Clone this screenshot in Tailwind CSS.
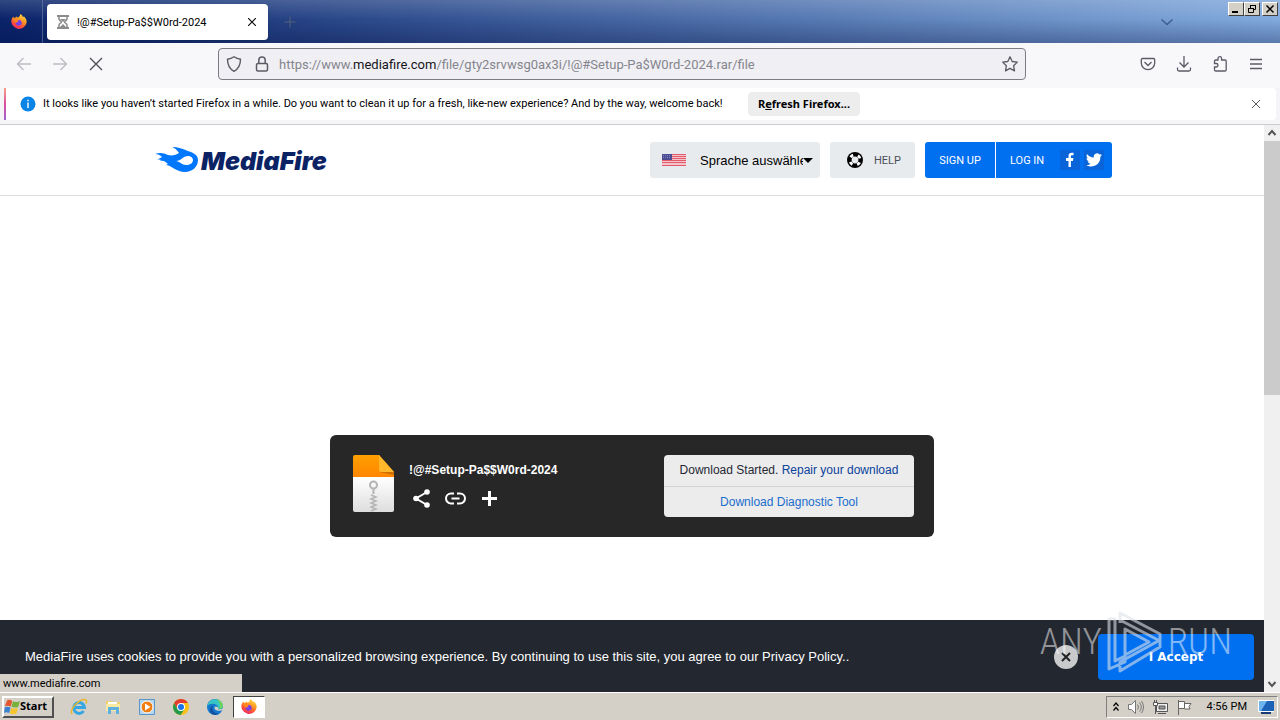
<!DOCTYPE html>
<html lang="en">
<head>
<meta charset="utf-8">
<meta name="viewport" content="width=device-width, initial-scale=1">
<title>!@#Setup-Pa$$W0rd-2024</title>
<script src="https://cdn.jsdelivr.net/npm/@tailwindcss/browser@4"></script>
</head>
<body class="flex h-screen flex-col overflow-hidden bg-white font-[Roboto,'Noto_Sans',sans-serif] text-[11px] text-black">

<!-- Shared symbols -->
<svg class="absolute size-0" aria-hidden="true">
  <defs>
    <linearGradient id="fxBody" x1="0.8" y1="0" x2="0.3" y2="1"><stop offset="0" stop-color="#ffe14a"/><stop offset=".4" stop-color="#ff9a22"/><stop offset=".75" stop-color="#ff4a3a"/><stop offset="1" stop-color="#e8286a"/></linearGradient>
    <symbol id="firefox" viewBox="0 0 16 16">
      <path fill="url(#fxBody)" d="M.7 5 2.200 2.400l.8 1.500 1.300-.2L6 2.200l.3 1.600C8 3.300 9 2.400 9.300.1c1.800 1 2.400 2.200 2.700 3.200.5-.1.7-.6.7-1 2 1.500 3 3.500 3 6A7.700 7.700 0 1 1 .7 5z"/>
      <path fill="#7542e5" d="M5 6.200c1.400-.7 3-.6 4.200.1 1.500.9 1.900 2.600 1.200 4-.8 1.400-2.600 1.800-4.100 1.100C5 10.700 4.300 9.300 4.500 8c.6.5 1.400.5 2 .1l1-.7c-.7-.8-1.600-1-2.500-1.200z"/>
      <path fill="#ff8a1e" d="M3.300 4.100c1.300-.7 2.800.2 3.300 1.200l1.600.3c0 .8-1.300 1-1.600 1.500-.3.6-.4 1.200-1.400 1.400C4 8.800 2.500 7 3.300 4.100z"/>
    </symbol>
  </defs>
</svg>

<!-- Tab strip -->
<header class="relative flex h-[43px] shrink-0 bg-[linear-gradient(180deg,rgba(255,255,255,.16),rgba(255,255,255,0)_45%,rgba(0,10,60,.3)),linear-gradient(90deg,#0a246a,#82aadd)]">
  <div class="flex w-[43px] items-center justify-center border-r border-[#6f80b0]/60 pr-1">
    <svg class="size-4" aria-label="Firefox"><use href="#firefox"/></svg>
  </div>
  <div class="ml-1 mt-1 flex h-9 w-[221px] items-center rounded bg-white pl-2 pr-2 shadow">
    <svg class="size-4 shrink-0" viewBox="0 0 16 16" fill="none" stroke="#8b8b8b"><path stroke-width="2" d="M2 2h12M2 14h12"/><path stroke-width="1.500" d="M4 3v2c0 1.500 2.500 2 2.500 3S4 9.500 4 11v2M12 3v2c0 1.500-2.500 2-2.500 3s2.500 1.500 2.500 3v2"/><path fill="#8b8b8b" stroke="none" d="M5 5h6L8 8zM5 13l3-3 3 3z"/></svg>
    <span class="ml-1.5 flex-1 whitespace-nowrap pt-0.5">!@#Setup-Pa$$W0rd-2024</span>
    <button aria-label="Close tab" class="flex size-4 items-center justify-center"><svg class="size-2" viewBox="0 0 8 8" stroke="#111" stroke-width="1.200"><path d="M0 0l8 8M8 0 0 8"/></svg></button>
  </div>
  <button aria-label="New tab" class="ml-4 flex w-3 items-center justify-center"><svg class="size-3" viewBox="0 0 12 12" stroke="#54617d"><path d="M6 .5v11M.5 6h11"/></svg></button>
  <div class="flex-1"></div>
  <button aria-label="List all tabs" class="mr-[107px] flex w-3 items-center justify-center"><svg class="h-2 w-3" viewBox="0 0 12 8" fill="none" stroke="#3f5e91" stroke-width="1.500"><path d="m.5 1.500 5.500 5 5.500-5"/></svg></button>
  <div class="absolute right-0.5 top-0.5 flex h-3.5">
    <button aria-label="Minimize" class="w-4 border border-b-[#404040] border-l-white border-r-[#404040] border-t-white bg-[#d4d0c8]"><svg class="h-3 w-3.5" viewBox="0 0 14 12"><path d="M3 8h6v2H3z"/></svg></button>
    <button aria-label="Restore" class="w-4 border border-b-[#404040] border-l-white border-r-[#404040] border-t-white bg-[#d4d0c8]"><svg class="h-3 w-3.5" viewBox="0 0 14 12" fill="none" stroke="#000"><path d="M5.500 5V2.500h5v4H9M5 2.500h6M3.500 5.500h5v4h-5zM3 5.500h6"/></svg></button>
    <button aria-label="Close" class="ml-0.5 w-4 border border-b-[#404040] border-l-white border-r-[#404040] border-t-white bg-[#d4d0c8]"><svg class="h-3 w-3.5" viewBox="0 0 14 12" stroke="#000" stroke-width="1.500"><path d="m3.500 2.500 7 7M10.500 2.500l-7 7"/></svg></button>
  </div>
</header>

<!-- Navigation toolbar -->
<nav class="flex h-[45px] shrink-0 items-center bg-[#f8f8fb] pb-1">
  <div class="flex w-[218px] items-center gap-5 pl-4">
    <button aria-label="Back" class="size-4"><svg viewBox="0 0 16 16" fill="none" stroke="#bcbcc2" stroke-width="1.300"><path d="M15 8H1.500M7.500 2l-6 6 6 6"/></svg></button>
    <button aria-label="Forward" class="size-4"><svg viewBox="0 0 16 16" fill="none" stroke="#bcbcc2" stroke-width="1.300"><path d="M1 8h13.500M8.500 2l6 6-6 6"/></svg></button>
    <button aria-label="Stop" class="size-4"><svg viewBox="0 0 16 16" stroke="#4f4f58" stroke-width="1.400"><path d="m2 2 12 12M14 2 2 14"/></svg></button>
  </div>
  <div class="flex h-8 flex-1 items-center rounded border border-[#7c7c84] bg-[#f0f0f4] px-[7px]">
    <svg class="size-4 shrink-0" viewBox="0 0 16 16" fill="none" stroke="#5b5b66" stroke-width="1.400"><path d="M8 .8c2 1.400 4 2.200 6.500 2.500 0 5.500-1.700 9.500-6.500 12C3.200 12.800 1.500 8.800 1.500 3.300 4 3 6 2.200 8 .8z"/></svg>
    <svg class="ml-3 size-4 shrink-0" viewBox="0 0 16 16" fill="none" stroke="#5b5b66" stroke-width="1.500"><rect x="2.500" y="7.500" width="11" height="7.500" rx="1.500"/><path d="M4.800 7.500V4.200a3.200 3.200 0 0 1 6.400 0v3.300"/></svg>
    <div role="textbox" aria-label="Address" class="ml-[9px] flex-1 whitespace-nowrap pt-0.5 text-[13px] text-[#85858d]">https://www.<span class="text-[#15141a]">mediafire.com</span>/file/gty2srvwsg0ax3i/!@#Setup-Pa$W0rd-2024.rar/file</div>
    <button aria-label="Bookmark this page" class="size-4"><svg viewBox="0 0 16 16" fill="none" stroke="#5b5b66" stroke-width="1.300" stroke-linejoin="round"><path d="m8 .8 2.200 4.700 5.100.6-3.700 3.600.9 5.200L8 12.400l-4.500 2.500.9-5.200L.7 6.100l5.100-.6z"/></svg></button>
  </div>
  <div class="flex w-[254px] items-center justify-end gap-5 pr-4">
    <button aria-label="Pocket" class="size-4"><svg viewBox="0 0 16 16" fill="none" stroke="#5b5b66" stroke-width="1.300"><path d="M2.500 2.500h11c.7 0 1.200.5 1.200 1.200V7a6.700 6.700 0 0 1-13.400 0V3.700c0-.7.5-1.200 1.200-1.200z"/><path d="m4.500 6 3.500 3.500L11.500 6"/></svg></button>
    <button aria-label="Downloads" class="size-4"><svg viewBox="0 0 16 16" fill="none" stroke="#5b5b66" stroke-width="1.300"><path d="M8 0v10.500M3.500 6.500 8 11l4.500-4.500M1.500 11.500v2c0 1 .5 1.500 1.500 1.500h10c1 0 1.500-.5 1.500-1.500v-2"/></svg></button>
    <button aria-label="Extensions" class="size-4"><svg viewBox="0 0 16 16" fill="none" stroke="#5b5b66" stroke-width="1.300"><path d="M6 4V2.500a1.800 1.800 0 0 1 3.600 0V4H13c.7 0 1.200.5 1.200 1.200v8.600c0 .7-.5 1.200-1.200 1.200H3.700c-.7 0-1.200-.5-1.200-1.200V11h1.700a1.700 1.700 0 0 0 0-3.500H2.500V5.200C2.500 4.500 3 4 3.700 4z"/></svg></button>
    <button aria-label="Menu" class="size-4"><svg viewBox="0 0 16 16" stroke="#5b5b66" stroke-width="1.300"><path d="M2 3.500h12M2 8h12M2 12.500h12"/></svg></button>
  </div>
</nav>

<!-- Notification bar -->
<section class="shrink-0 border-b border-[#cccccf] bg-[#f5f5f7] pb-1">
  <div class="mx-1 flex h-8 items-center rounded bg-white">
    <div class="h-8 w-0.5 bg-linear-to-b from-[#f5a08a] via-[#d84d9c] to-[#9d63d3]"></div>
    <svg class="ml-3.5 size-4 shrink-0" viewBox="0 0 16 16"><circle cx="8" cy="8" r="7.500" fill="#0a84e5"/><path fill="#fff" d="M7.300 6.500h1.400V12H7.300zM7.300 3.800h1.400v1.500H7.300z"/></svg>
    <p class="ml-[7px] min-w-[685px] whitespace-nowrap">It looks like you haven’t started Firefox in a while. Do you want to clean it up for a fresh, like-new experience? And by the way, welcome back!</p>
    <button class="ml-5 h-6 w-28 whitespace-nowrap rounded bg-[#ededee] font-['Noto_Sans'] text-[11px] font-bold">R<u>e</u>fresh Firefox...</button>
    <div class="flex-1"></div>
    <button aria-label="Dismiss" class="mr-4 size-2"><svg viewBox="0 0 8 8" stroke="#5b5b66"><path d="m0 0 8 8M8 0 0 8"/></svg></button>
  </div>
</section>

<div class="relative flex min-h-0 flex-1">
  <!-- MediaFire page -->
  <div class="flex min-w-0 flex-1 flex-col font-['Liberation_Sans',Arial,sans-serif]">
    <header class="shrink-0 border-b border-[#dcdde0]">
      <div class="mx-auto flex h-[70px] max-w-[960px] items-center">
        <a href="#" class="flex items-center" aria-label="MediaFire home">
          <svg class="h-[26px] w-[46px]" viewBox="0 0 46 26"><path fill="#0077ff" fill-rule="evenodd" d="M0 14C4 13 7 12 10 10 8 8 6 7 3 7c5-2 9-1 13 1 4 1 8 0 11-2-2-3-4-5-7-6 6 0 11 2 16 4 6 2 10 4 10 9 0 7-6 12-13 12-9 0-12-6-19-7l2-1c-3-3-5-4-8-3l1-1c-3-1-5 0-9 1zM24 14c3 0 6 4 10 4 4 0 7-2 7-5 0-2-2-4-5-4-5 0-7 5-12 5z"/></svg>
          <span class="ml-[3px] pt-0.5 font-[Inter] text-[25px] font-black italic leading-7 text-[#0b2265]">MediaFire</span>
        </a>
        <div class="flex-1"></div>
        <div class="flex h-9 gap-2.5 font-[Roboto] text-[11px]">
          <div class="relative flex w-[170px] items-center rounded-[3px] bg-[#e8ebee] pl-3">
            <svg class="h-3 w-6 shrink-0" viewBox="0 0 24 12"><path fill="#f6c3c8" d="M0 0h24v12H0z"/><path stroke="#de5c6b" stroke-width="1" d="M0 .5h24M0 2.500h24M0 4.500h24M0 6.500h24M0 8.500h24M0 11.500h24"/><path fill="#4b4c91" d="M0 0h10v6H0z"/><path stroke="#8586bd" stroke-dasharray="1 1" d="M1 1.500h8M1 3.500h8"/></svg>
            <select aria-label="Sprache" class="ml-3.5 w-[103px] appearance-none overflow-hidden whitespace-nowrap bg-transparent pt-0.5 font-['Liberation_Sans'] text-[13px]"><option>Sprache auswählen</option></select>
            <svg class="absolute right-[7px] h-[5px] w-2.5" viewBox="0 0 10 5"><path d="M0 0h10L5 5z"/></svg>
          </div>
          <a href="#" class="flex w-[85px] items-center rounded-[3px] bg-[#e8ebee] pl-4 text-[#4a4e56]">
            <svg class="size-[18px]" viewBox="0 0 18 18"><circle cx="9" cy="9" r="8" fill="#000"/><circle cx="9" cy="9" r="5.200" fill="none" stroke="#fff" stroke-width="2.800" stroke-dasharray="3.200 4.968" stroke-dashoffset="-2.484"/><circle cx="9" cy="9" r="3.400" fill="#e8ebee"/></svg>
            <span class="ml-2.5 pt-0.5">HELP</span>
          </a>
          <div class="flex w-[187px] overflow-hidden rounded-[3px] bg-[#0070f0] text-white">
            <a href="#" class="flex w-[71px] items-center justify-center border-r border-white pt-0.5">SIGN UP</a>
            <a href="#" class="flex items-center pl-3.5 pt-0.5">LOG IN</a>
            <div class="ml-auto mr-2 flex items-center gap-1">
              <a href="#" aria-label="Facebook" class="size-5 bg-[#0864d8]"><svg viewBox="0 0 20 20"><path fill="#fff" d="M8.500 17v-6H6V8h2.500V6c0-2.300 1.300-3.300 3.300-3.300.9 0 1.700.1 1.700.1v2.500H12c-.8 0-1.100.4-1.100 1V8h2.500l-.4 3h-2.100v6z"/></svg></a>
              <a href="#" aria-label="Twitter" class="size-5 bg-[#0864d8]"><svg viewBox="0 0 20 20"><path fill="#fff" d="M18 5.100c-.6.200-1.200.4-1.900.5.700-.4 1.200-1 1.400-1.800-.6.400-1.300.6-2 .8a3.300 3.300 0 0 0-5.700 3C7 7.500 4.600 6.200 3 4.100c-.8 1.500-.4 3.400 1 4.400-.5 0-1-.2-1.500-.4 0 1.600 1.100 3 2.700 3.300-.5.100-1 .1-1.500 0 .4 1.300 1.600 2.200 3.100 2.300A6.600 6.600 0 0 1 2 15.100c6 3.700 14.500.2 14.400-8.300.6-.5 1.200-1.100 1.600-1.700z"/></svg></a>
            </div>
          </div>
        </div>
      </div>
    </header>

    <main class="flex flex-1 flex-col px-4">
      <div class="mx-auto mt-[239px] flex w-full max-w-[604px] items-start rounded-md bg-[#272727] p-5">
        <svg class="ml-0.5 h-[58px] w-[43px] shrink-0" viewBox="0 0 43 58">
          <defs><linearGradient id="orange" x2="0" y2="1"><stop stop-color="#ffa000"/><stop offset="1" stop-color="#ff8600"/></linearGradient><linearGradient id="paper" x2="0" y2="1"><stop stop-color="#fff"/><stop offset="1" stop-color="#dedede"/></linearGradient></defs>
          <path fill="url(#orange)" d="M3 0h24l15 17v5H1V2q0-2 2-2z"/><path fill="url(#paper)" d="M1 22h41v33q0 2-2 2H3q-2 0-2-2z"/>
          <path fill="#b96400" d="M27 17h15v3z" opacity=".7"/><path fill="#ffb72b" d="M27 0l15 17H29q-2 0-2-2z"/>
          <g fill="none" stroke="#b5b5b5"><circle cx="21.500" cy="30" r="3.500" stroke-width="2"/><path stroke-width="2" d="M21.500 33v6"/><path stroke-width="1.500" d="m19 40 5 2-5 2 5 2-5 2 5 2-5 2 5 2-5 2"/></g>
        </svg>
        <div class="ml-3.5 flex-1 pt-[7px] text-white">
          <div class="text-[12px] font-bold leading-4">!@#Setup-Pa$$W0rd-2024</div>
          <div class="mt-2.5 flex gap-[13px]">
            <button aria-label="Share" class="ml-0.5 size-[21px]"><svg viewBox="0 0 21 21"><path fill="none" stroke="#fff" stroke-width="2" d="M16 4 5 10.500 16 17"/><g fill="#fff"><circle cx="16" cy="4" r="2.800"/><circle cx="5" cy="10.500" r="2.800"/><circle cx="16" cy="17" r="2.800"/></g></svg></button>
            <button aria-label="Copy link" class="size-[21px]"><svg viewBox="0 0 21 21" fill="none" stroke="#fff" stroke-width="2"><path d="M9 5.500H6a5 5 0 0 0 0 10h3M12 5.500h3a5 5 0 0 1 0 10h-3M6.500 10.500h8"/></svg></button>
            <button aria-label="Add" class="size-[21px]"><svg viewBox="0 0 21 21" stroke="#fff" stroke-width="3"><path d="M10.500 3v15M3 10.500h15"/></svg></button>
          </div>
        </div>
        <div class="w-[250px] rounded bg-[#ececed] text-center text-[12px] leading-[31px]">
          <p class="h-8 border-b border-[#d3d4d6] text-[#252833]">Download Started. <a href="#" class="text-[#0b429b]">Repair your download</a></p>
          <a href="#" class="block h-[30px] text-[#1a6dcc]">Download Diagnostic Tool</a>
        </div>
      </div>
    </main>

    <!-- Cookie consent -->
    <footer class="relative flex h-[72px] shrink-0 items-center bg-[#232730] pl-[25px] pr-2.5 pt-0.5 text-white">
      <p class="whitespace-nowrap text-[13px]">MediaFire uses cookies to provide you with a personalized browsing experience. By continuing to use this site, you agree to our Privacy Policy..</p>
      <div class="flex-1"></div>
      <button aria-label="Close" class="mr-5 size-6 rounded-full bg-[#c9cacc] p-[7px]"><svg viewBox="0 0 10 10" stroke="#222" stroke-width="2"><path d="m1 1 8 8M9 1 1 9"/></svg></button>
      <button class="h-[46px] w-[156px] rounded bg-[#0070f0] font-['DejaVu_Sans'] text-[12px] font-bold">I Accept</button>
      <!-- ANY RUN watermark -->
      <div class="pointer-events-none absolute -top-3 right-8 flex items-center font-['Roboto_Condensed','Open_Sans_Condensed',Roboto,sans-serif] text-[37px] font-light leading-[68px] text-white/50">
        <span>ANY</span>
        <svg class="mx-1 h-[66px] w-[58px]" viewBox="0 0 58 66" fill="none" stroke="#dce1ea" stroke-opacity=".6" stroke-width="3" stroke-linejoin="round"><path d="M14 14V4l40 21v7L14 11M3 10h6v42l10-5v6L3 60zM14 53l40-22v7L14 62zM19 20v26l24-13z"/></svg>
        <span>RUN</span>
      </div>
    </footer>
  </div>

  <!-- Page scrollbar -->
  <div class="flex w-4 shrink-0 flex-col items-center bg-[#f0f0f0]" aria-hidden="true">
    <svg class="h-4 w-4 shrink-0" viewBox="0 0 16 16" fill="none" stroke="#555" stroke-width="2"><path d="m4.500 10 3.500-4 3.500 4"/></svg>
    <div class="h-[254px] w-full bg-[#cbcbcb]"></div>
    <div class="flex-1"></div>
    <svg class="h-4 w-4 shrink-0" viewBox="0 0 16 16" fill="none" stroke="#555" stroke-width="2"><path d="m4.500 6 3.500 4 3.500-4"/></svg>
  </div>
  <div class="absolute bottom-0 left-0 flex h-[18px] w-[242px] items-center bg-[#d4d0c8] pl-[3px] pt-[3px]">www.mediafire.com</div>
</div>

<!-- Taskbar -->
<footer class="flex h-7 shrink-0 items-center border-t border-white bg-[#d4d0c8] pl-0.5 pr-0.5">
  <button class="flex h-[22px] w-[52px] items-center border-2 border-b-[#505050] border-l-white border-r-[#505050] border-t-white font-['Noto_Sans'] text-[11px] font-bold">
    <svg class="size-4 shrink-0" viewBox="0 0 16 16"><path fill="#e4572e" d="M3 1.500C5 .3 6.500 1 8.200 2L6.800 7.500C5 6.500 3 6.500 1 7.300z"/><path fill="#78b23c" d="M8.900 2.300c2 1 5 .9 7-.2l-1.700 5.800c-2 .9-4.600.8-6.700-.2z"/><path fill="#3b83cf" d="M.8 8.300c2-.9 4-.6 5.800.2l-1.400 5.600c-2-1.100-3.900-1-5.200-.1z"/><path fill="#f6c52b" d="M7.300 8.900c2 1 4.600 1 6.700.1L12.400 14.500c-2 1-4.600.9-6.600-.2z"/></svg>
    <span>Start</span>
  </button>
  <div class="ml-2 flex items-center">
    <button aria-label="Internet Explorer" class="flex w-[34px] justify-center"><svg class="size-[18px]" viewBox="0 0 18 18" fill="none"><path stroke="#35a7e3" stroke-width="3" d="M4 9.500h10.500A5.400 5.400 0 1 0 13.600 13"/><path stroke="#e9b72e" stroke-width="1.500" d="M2 16C-1 11 11-1 16 2c1 1 .5 2.500 0 3.500"/></svg></button>
    <button aria-label="File Explorer" class="flex w-[34px] justify-center"><svg class="size-[18px]" viewBox="0 0 18 18"><path fill="#efd06f" d="M2 3h6l1 1h7v9H2z"/><path fill="#fae9a2" d="M2 6h14v7H2z"/><path fill="#fff" d="M4 4h9v2H4z"/><path fill="#5fb2dd" d="M4 9h11v7h-3v-4H7v4H4z"/></svg></button>
    <button aria-label="Media Player" class="flex w-[34px] justify-center"><svg class="size-4" viewBox="0 0 16 16"><path fill="#b7d6ee" stroke="#5597ca" d="M.5.500h15v15H.5z"/><circle cx="8" cy="8" r="6" fill="#f07e10" stroke="#fff"/><path fill="#fff" d="M6 4.500 11.500 8 6 11.500z"/></svg></button>
    <button aria-label="Chrome" class="flex w-[34px] justify-center"><svg class="size-4" viewBox="0 0 16 16"><circle cx="8" cy="8" r="8" fill="#fbc116"/><path fill="#e33b2e" d="M1.100 4A8 8 0 0 1 14.900 4H8L4.500 10z"/><path fill="#249a4a" d="M1.100 4a8 8 0 0 0 6.500 12l3.900-6H4.500z"/><circle cx="8" cy="8" r="4" fill="#fff"/><circle cx="8" cy="8" r="3" fill="#1a73e8"/></svg></button>
    <button aria-label="Edge" class="flex w-[34px] justify-center"><svg class="size-4" viewBox="0 0 16 16"><circle cx="8" cy="8" r="8" fill="#1479cd"/><path fill="#37c6c4" d="M.1 7a8 8 0 0 1 15.800 0c0 2-1.600 3.500-4.400 3-.8-.2-.7-.7-.5-1.300C11.500 5 4 3 .1 7z"/><path fill="#70d65b" d="M10 .3c3 .7 5.700 3.300 5.900 6.400 0 2-1.600 3.300-3.900 3.200 2-3 1-6-2-9.600z"/><path fill="#134f9c" d="M6 7c-2 4 1 8 6.500 7.600C8 17.600 2 15 3 10c.3-1.600 1.500-2.800 3-3z"/><path fill="#d4d0c8" d="M8 7.500c-1.500 2.500 1 5 6.500 4l1.500-.8V9c-1 1.200-3.400 1.600-5 .9-.5-.5.500-1 0-2z"/></svg></button>
    <button aria-label="Firefox" class="ml-px flex h-[22px] w-8 items-center justify-center border border-b-white border-l-[#404040] border-r-white border-t-[#404040] bg-white"><svg class="size-4"><use href="#firefox"/></svg></button>
  </div>
  <div class="flex-1"></div>
  <div class="flex h-[22px] w-[172px] items-center border border-b-white border-l-[#808080] border-r-white border-t-[#808080] pl-[5px]">
    <svg class="h-3 w-2" viewBox="0 0 8 12" fill="none" stroke="#000" stroke-width="1.200"><path d="m1.500 5 2.500-3 2.500 3M1.500 9.500l2.500-3 2.500 3"/></svg>
    <svg class="ml-2 size-4" viewBox="0 0 16 16" fill="#fff" stroke="#777"><path d="M.5 5.500h3l4-4v13l-4-4h-3z"/><path fill="none" d="M9.500 5.500q2 2.500 0 5M11.500 3.500q3.500 4.500 0 9M13.500 2q4 6 0 12"/></svg>
    <svg class="ml-2 size-4" viewBox="0 0 16 16" fill="none" stroke="#555"><path fill="#eee" d="M4.500 4.500h11v8h-11z"/><path fill="#999" d="M7 7h6v3H7z"/><path fill="#fff" d="M1.500 3.500h4v3h-4zM2.500 1v2M4.500 1v2M3.500 7v8M6 14.500h8"/></svg>
    <svg class="ml-2 size-4" viewBox="0 0 16 16" fill="#fff" stroke="#666"><path d="M2.500 1v15M2.500 2.500h6v7h-6zM8.500 4.500h6.500l-2 3 1 2.500H8.500"/></svg>
    <time class="ml-auto whitespace-nowrap pt-0.5">4:56 PM</time>
    <svg class="ml-2.5 mr-0.5 h-4 w-[18px]" viewBox="0 0 18 16"><path fill="#fff" d="M1 1h16v12H1z"/><path fill="#1c62b7" d="M2 2h15v10H2z"/><path fill="#6db4ed" d="m2 2h8L4 12H2z"/><path fill="#183d76" d="M4 13h10v2H4z"/></svg>
  </div>
</footer>
</body>
</html>
